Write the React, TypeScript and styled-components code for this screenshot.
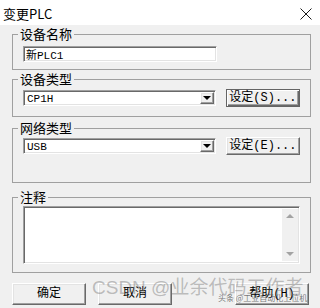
import React from 'react';
import styled, { createGlobalStyle } from 'styled-components';

const GlobalStyle = createGlobalStyle`
  html, body {
    margin: 0;
    padding: 0;
    background: #f0f0f0;
  }
  body {
    font-family: "Noto Sans CJK SC", "Liberation Sans", sans-serif;
    color: #000;
  }
`;

const raised = `
  border: 1px solid;
  border-color: #ffffff #696969 #696969 #ffffff;
  box-shadow: inset -1px -1px 0 #a0a0a0, inset 1px 1px 0 #e3e3e3;
`;

const sunken = `
  border: 1px solid;
  border-color: #a0a0a0 #ffffff #ffffff #a0a0a0;
  box-shadow: inset 1px 1px 0 #696969, inset -1px -1px 0 #e3e3e3;
`;

const Window = styled.div`
  position: relative;
  width: 320px;
  height: 308px;
  overflow: hidden;
  background: #f0f0f0;
  display: flex;
  flex-direction: column;
`;

const TitleBar = styled.div`
  height: 25px;
  flex-shrink: 0;
  background: #ffffff;
  display: flex;
  align-items: center;
  justify-content: space-between;
  padding: 2px 8px 0 3px;
  box-sizing: border-box;
`;

const Title = styled.span`
  font-size: 13px;
  line-height: 16px;
  color: #000;
`;

const Body = styled.div`
  display: flex;
  flex-direction: column;
  padding: 1px 9px 0 12px;
`;

const Group = styled.fieldset<{ $gap: number; $top: number; $bottom: number }>`
  margin: ${(p) => p.$gap}px 0 0;
  padding: ${(p) => p.$top}px 10px ${(p) => p.$bottom}px;
  border: 1px solid #a0a0a0;
  min-width: 0;
`;

const Legend = styled.legend`
  margin-left: -5px;
  padding: 0 2px;
  font-size: 13px;
  line-height: 16px;
`;

const TextInput = styled.input`
  ${sunken}
  box-sizing: border-box;
  width: 194px;
  height: 16px;
  margin: 0;
  padding: 0 2px;
  display: block;
  background: #ffffff;
  font-family: "Liberation Mono", "Noto Sans CJK SC", monospace;
  font-size: 11px;
  color: #000;
  outline: none;
`;

const Row = styled.div`
  display: flex;
  align-items: center;
  gap: 10px;
  height: 18px;
`;

const Combo = styled.div`
  ${sunken}
  box-sizing: border-box;
  width: 195px;
  height: 16px;
  display: flex;
  align-items: stretch;
  background: #ffffff;
  padding: 2px;
`;

const ComboText = styled.span`
  flex: 1;
  font-family: "Liberation Mono", "Noto Sans CJK SC", monospace;
  font-size: 11px;
  line-height: 12px;
  padding-left: 1px;
`;

const ArrowButton = styled.span`
  ${raised}
  box-sizing: border-box;
  width: 14px;
  margin: -1px -1px -1px 0;
  background: #f0f0f0;
  display: flex;
  align-items: center;
  justify-content: center;
`;

const Triangle = styled.span<{ $up?: boolean; $color?: string }>`
  width: 0;
  height: 0;
  border-left: 4px solid transparent;
  border-right: 4px solid transparent;
  ${(p) =>
    p.$up
      ? `border-bottom: 4px solid ${p.$color || '#000'};`
      : `border-top: 4px solid ${p.$color || '#000'};`}
`;

const Button = styled.button<{ $width: number; $height: number; $framed?: boolean }>`
  box-sizing: border-box;
  width: ${(p) => p.$width}px;
  height: ${(p) => p.$height}px;
  margin: 0;
  padding: 0;
  background: #f0f0f0;
  font-family: "Liberation Mono", "Noto Sans CJK SC", monospace;
  font-size: 12px;
  line-height: 14px;
  color: #000;
  ${(p) =>
    p.$framed
      ? `
    border: 1px solid #646464;
    box-shadow: inset 1px 1px 0 #ffffff, inset -1px -1px 0 #696969, inset -2px -2px 0 #a0a0a0;
  `
      : raised}
`;

const Memo = styled.div`
  ${sunken}
  box-sizing: border-box;
  height: 58px;
  display: flex;
  background: #ffffff;
  padding: 2px 1px 2px 2px;
`;

const MemoArea = styled.div`
  flex: 1;
`;

const ScrollBar = styled.div`
  width: 16px;
  background: #f0f0f0;
  display: flex;
  flex-direction: column;
  align-items: center;
  justify-content: space-between;
  padding: 5px 0 5px;
`;

const Footer = styled.div`
  display: flex;
  gap: 12px;
  margin-top: 10px;
  padding: 0 11px 0 12px;
`;

const Spacer = styled.div`
  flex: 1;
`;

const Watermark = styled.div`
  position: absolute;
  left: 92px;
  top: 276px;
  font-family: "Liberation Sans", "Noto Sans CJK SC", sans-serif;
  font-size: 19px;
  line-height: 24px;
  color: rgba(110, 110, 110, 0.42);
  white-space: nowrap;
  pointer-events: none;
`;

const SmallMark = styled.div`
  position: absolute;
  left: 218px;
  top: 292px;
  font-size: 8px;
  line-height: 11px;
  color: rgba(50, 50, 50, 0.65);
  white-space: nowrap;
  pointer-events: none;
`;

const CloseIcon = () => (
  <svg width="12" height="12" viewBox="0 0 12 12">
    <path d="M0.5 0.5 L11.5 11.5 M11.5 0.5 L0.5 11.5" stroke="#1a1a1a" strokeWidth="1" fill="none" />
  </svg>
);

export default function App() {
  return (
    <Window>
      <GlobalStyle />
      <TitleBar>
        <Title>变更PLC</Title>
        <CloseIcon />
      </TitleBar>
      <Body>
        <Group $gap={0} $top={4} $bottom={7}>
          <Legend>设备名称</Legend>
          <TextInput defaultValue="新PLC1" />
        </Group>
        <Group $gap={1} $top={2} $bottom={9}>
          <Legend>设备类型</Legend>
          <Row>
            <Combo>
              <ComboText>CP1H</ComboText>
              <ArrowButton>
                <Triangle />
              </ArrowButton>
            </Combo>
            <Button $width={75} $height={18} $framed>
              设定(S)...
            </Button>
          </Row>
        </Group>
        <Group $gap={3} $top={1} $bottom={27}>
          <Legend>网络类型</Legend>
          <Row>
            <Combo>
              <ComboText>USB</ComboText>
              <ArrowButton>
                <Triangle />
              </ArrowButton>
            </Combo>
            <Button $width={75} $height={18}>
              设定(E)...
            </Button>
          </Row>
        </Group>
        <Group $gap={6} $top={1} $bottom={8}>
          <Legend>注释</Legend>
          <Memo>
            <MemoArea />
            <ScrollBar>
              <Triangle $up $color="#a3a3a3" />
              <Triangle $color="#a3a3a3" />
            </ScrollBar>
          </Memo>
        </Group>
      </Body>
      <Footer>
        <Button $width={74} $height={22}>确定</Button>
        <Button $width={74} $height={22}>取消</Button>
        <Spacer />
        <Button $width={74} $height={22}>帮助(H)</Button>
      </Footer>
      <Watermark>CSDN @业余代码工作者</Watermark>
      <SmallMark>头条 @工业自动化上位机</SmallMark>
    </Window>
  );
}
